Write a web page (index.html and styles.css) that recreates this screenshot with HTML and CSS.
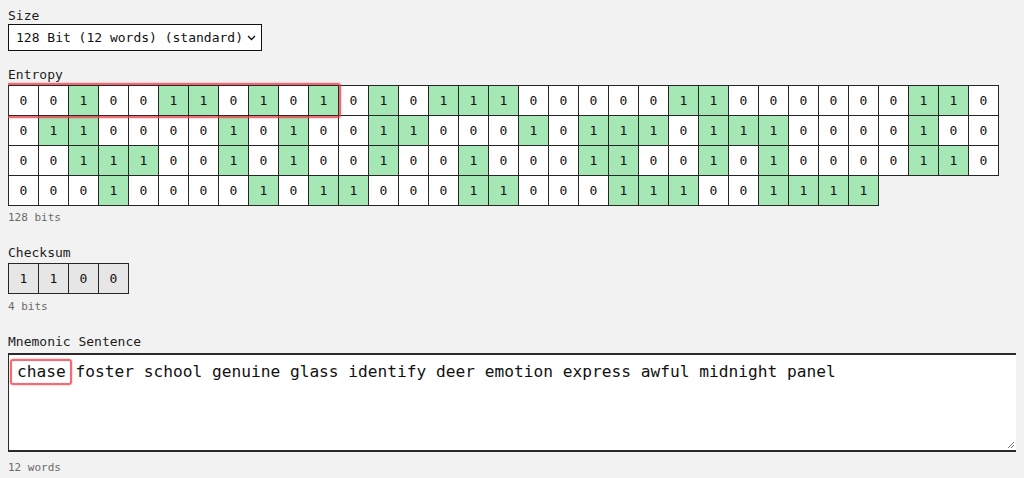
FILE: index.html
```html
<!DOCTYPE html>
<html lang="en">
<head>
<meta charset="utf-8">
<title>BIP39 Mnemonic</title>
<link rel="stylesheet" href="styles.css">
</head>
<body>
<div class="label">Size</div>
<div class="select">
  <span>128 Bit (12 words) (standard)</span>
  <svg class="chev" width="9" height="6" viewBox="0 0 9 6"><path d="M1 1 L4.5 4.5 L8 1" fill="none" stroke="#111" stroke-width="1.4"/></svg>
</div>

<div class="label gap">Entropy</div>
<div class="grid">
  <div class="mark"></div>
  <span class="z">0</span><span class="z">0</span><span class="o">1</span><span class="z">0</span><span class="z">0</span><span class="o">1</span><span class="o">1</span><span class="z">0</span><span class="o">1</span><span class="z">0</span><span class="o">1</span><span class="z">0</span><span class="o">1</span><span class="z">0</span><span class="o">1</span><span class="o">1</span><span class="o">1</span><span class="z">0</span><span class="z">0</span><span class="z">0</span><span class="z">0</span><span class="z">0</span><span class="o">1</span><span class="o">1</span><span class="z">0</span><span class="z">0</span><span class="z">0</span><span class="z">0</span><span class="z">0</span><span class="z">0</span><span class="o">1</span><span class="o">1</span><span class="z">0</span>
  <span class="z">0</span><span class="o">1</span><span class="o">1</span><span class="z">0</span><span class="z">0</span><span class="z">0</span><span class="z">0</span><span class="o">1</span><span class="z">0</span><span class="o">1</span><span class="z">0</span><span class="z">0</span><span class="o">1</span><span class="o">1</span><span class="z">0</span><span class="z">0</span><span class="z">0</span><span class="o">1</span><span class="z">0</span><span class="o">1</span><span class="o">1</span><span class="o">1</span><span class="z">0</span><span class="o">1</span><span class="o">1</span><span class="o">1</span><span class="z">0</span><span class="z">0</span><span class="z">0</span><span class="z">0</span><span class="o">1</span><span class="z">0</span><span class="z">0</span>
  <span class="z">0</span><span class="z">0</span><span class="o">1</span><span class="o">1</span><span class="o">1</span><span class="z">0</span><span class="z">0</span><span class="o">1</span><span class="z">0</span><span class="o">1</span><span class="z">0</span><span class="z">0</span><span class="o">1</span><span class="z">0</span><span class="z">0</span><span class="o">1</span><span class="z">0</span><span class="z">0</span><span class="z">0</span><span class="o">1</span><span class="o">1</span><span class="z">0</span><span class="z">0</span><span class="o">1</span><span class="z">0</span><span class="o">1</span><span class="z">0</span><span class="z">0</span><span class="z">0</span><span class="z">0</span><span class="o">1</span><span class="o">1</span><span class="z">0</span>
  <span class="z">0</span><span class="z">0</span><span class="z">0</span><span class="o">1</span><span class="z">0</span><span class="z">0</span><span class="z">0</span><span class="z">0</span><span class="o">1</span><span class="z">0</span><span class="o">1</span><span class="o">1</span><span class="z">0</span><span class="z">0</span><span class="z">0</span><span class="o">1</span><span class="o">1</span><span class="z">0</span><span class="z">0</span><span class="z">0</span><span class="o">1</span><span class="o">1</span><span class="o">1</span><span class="z">0</span><span class="z">0</span><span class="o">1</span><span class="o">1</span><span class="o">1</span><span class="o">1</span>
</div>
<div class="note">128 bits</div>

<div class="label gap2">Checksum</div>
<div class="grid check">
  <span class="c">1</span><span class="c">1</span><span class="c">0</span><span class="c">0</span>
</div>
<div class="note">4 bits</div>

<div class="label gap2">Mnemonic Sentence</div>
<div class="area"><span class="hl">chase</span> foster school genuine glass identify deer emotion express awful midnight panel<svg class="grip" width="9" height="9" viewBox="0 0 9 9"><path d="M8 2 L2 8 M8 5 L5 8" stroke="#777" stroke-width="1"/></svg></div>
<div class="note words">12 words</div>
</body>
</html>
```

FILE: styles.css
```css
body {
  margin: 8px;
  background: #f2f2f2;
  font-family: "DejaVu Sans Mono", "Liberation Mono", monospace;
  font-size: 13px;
  color: #1c1c1c;
}

.label {
  height: 16px;
  line-height: 16px;
}

.gap { margin-top: 16px; }
.gap2 { margin-top: 20px; }

.select {
  box-sizing: border-box;
  width: 254px;
  height: 27px;
  border: 1.5px solid #111;
  background: #fff;
  display: flex;
  align-items: center;
  justify-content: space-between;
  padding: 0 5px 0 7px;
  color: #111;
}

.chev { margin-top: 1px; }

.grid {
  position: relative;
  margin-top: 2px;
  display: grid;
  grid-template-columns: repeat(33, 30px);
  grid-auto-rows: 30px;
  height: 121px;
}

.grid span {
  box-sizing: border-box;
  width: 31px;
  height: 31px;
  border: 1px solid #262626;
  background: #fff;
  display: flex;
  align-items: center;
  justify-content: center;
  font-size: 13px;
  color: #111;
}

.grid span.o { background: #a5e8b5; }

.check {
  grid-template-columns: repeat(4, 30px);
  height: 31px;
}

.grid span.c { background: #e6e6e6; }

.mark {
  position: absolute;
  left: -2px;
  top: -2px;
  width: 331px;
  height: 31px;
  border: 2px solid rgba(236, 60, 72, 0.75);
  border-radius: 3px;
  box-shadow: 0 0 2px rgba(236, 60, 72, 0.6), inset 0 0 1px rgba(236, 60, 72, 0.5);
  z-index: 2;
  pointer-events: none;
}

.note {
  margin-top: 5px;
  height: 14px;
  line-height: 14px;
  font-size: 11px;
  color: #6a6a6a;
}

.check + .note { margin-top: 6px; }

.area {
  position: relative;
  box-sizing: border-box;
  margin-top: 3px;
  margin-left: -1px;
  width: 1011px;
  height: 99px;
  border: 2px solid #2a2a2a;
  background: #fff;
  padding: 6px 8px;
  font-size: 16.2px;
  line-height: 22px;
  color: #111;
}

.hl {
  position: relative;
}

.hl::after {
  content: "";
  position: absolute;
  left: -7px;
  right: -6px;
  top: -3px;
  bottom: -4px;
  border: 2px solid rgba(236, 60, 72, 0.75);
  border-radius: 3px;
  box-shadow: 0 0 2px rgba(236, 60, 72, 0.6), inset 0 0 1px rgba(236, 60, 72, 0.5);
}

.grip {
  position: absolute;
  right: 1px;
  bottom: 1px;
}

.words { margin-top: 9px; }
```
